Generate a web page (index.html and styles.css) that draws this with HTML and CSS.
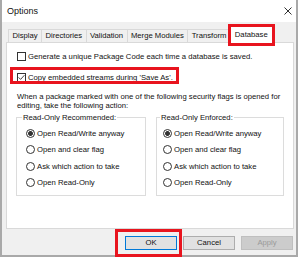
FILE: index.html
```html
<!DOCTYPE html>
<html>
<head>
<meta charset="utf-8">
<link rel="stylesheet" href="styles.css">
</head>
<body>
<div class="window">
  <div class="titlebar">
    <span class="title">Options</span>
    <svg class="close" width="8" height="8" viewBox="0 0 8 8"><path d="M0.5 0.5L7.5 7.5M7.5 0.5L0.5 7.5" stroke="#1a1a1a" stroke-width="0.9" fill="none"/></svg>
  </div>
  <div class="content">
    <div class="tabs">
      <div class="tab">Display</div>
      <div class="tab">Directories</div>
      <div class="tab">Validation</div>
      <div class="tab">Merge Modules</div>
      <div class="tab">Transform</div>
      <div class="tab active">Database</div>
    </div>
    <div class="panel">
      <div class="check"><span class="box"></span><span>Generate a unique Package Code each time a database is saved.</span></div>
      <div class="check marked"><span class="box"><svg width="7" height="7" viewBox="0 0 7 7"><path d="M0.6 3.4L2.6 5.4L6.4 1.2" stroke="#333" stroke-width="0.9" fill="none"/></svg></span><span>Copy embedded streams during 'Save As'.</span></div>
      <p class="info">When a package marked with one of the following security flags is opened for<br>editing, take the following action:</p>
      <div class="groups">
        <fieldset class="group left">
          <legend>Read-Only Recommended:</legend>
          <div class="radio"><span class="dot on"></span><span>Open Read/Write anyway</span></div>
          <div class="radio"><span class="dot"></span><span>Open and clear flag</span></div>
          <div class="radio"><span class="dot"></span><span>Ask which action to take</span></div>
          <div class="radio"><span class="dot"></span><span>Open Read-Only</span></div>
        </fieldset>
        <fieldset class="group right">
          <legend>Read-Only Enforced:</legend>
          <div class="radio"><span class="dot on"></span><span>Open Read/Write anyway</span></div>
          <div class="radio"><span class="dot"></span><span>Open and clear flag</span></div>
          <div class="radio"><span class="dot"></span><span>Ask which action to take</span></div>
          <div class="radio"><span class="dot"></span><span>Open Read-Only</span></div>
        </fieldset>
      </div>
    </div>
    <div class="buttons">
      <div class="okwrap"><button class="btn default">OK</button></div>
      <button class="btn">Cancel</button>
      <button class="btn" disabled>Apply</button>
    </div>
  </div>
</div>
</body>
</html>
```
FILE: styles.css
```css
* { box-sizing: border-box; }
html, body { margin: 0; padding: 0; }
body {
  width: 300px;
  height: 257px;
  overflow: hidden;
  background: #ffffff;
  font-family: "Liberation Sans", Arial, sans-serif;
  font-size: 7.7px;
  color: #111;
}
.window {
  width: 298px;
  height: 257px;
  border: 2px solid #a9a9a9;
  border-top: 0;
  background: #f0f0f0;
  display: flex;
  flex-direction: column;
}
.titlebar {
  flex: none;
  height: 22px;
  background: #fff;
  display: flex;
  align-items: center;
  justify-content: space-between;
  padding: 0 4px 0 5px;
}
.title { font-size: 9px; }
.close { display: block; }
.content {
  flex: 1;
  display: flex;
  flex-direction: column;
  padding: 4px 2px 0 4px;
}
.tabs {
  height: 16px;
  display: flex;
  align-items: flex-end;
  padding-left: 3px;
  position: relative;
  z-index: 1;
}
.tab {
  height: 13px;
  line-height: 12px;
  padding: 0 3.4px;
  margin-left: -1px;
  border: 1px solid #d9d9d9;
  border-bottom: 0;
  background: #f0f0f0;
  white-space: nowrap;
}
.tab.active {
  height: 17px;
  line-height: 15px;
  background: #fff;
  margin: 0 -2px -1px -2px;
  padding: 0 5px;
  position: relative;
}
.tab.active::after {
  content: "";
  position: absolute;
  left: -2px;
  right: -2px;
  top: -3px;
  bottom: -3px;
  border: 3px solid #e8141e;
}
.panel {
  height: 187px;
  border: 1px solid #d9d9d9;
  background: #fff;
  padding: 8px 9px 0 10px;
}
.check {
  display: flex;
  align-items: center;
  gap: 2px;
  height: 11px;
  white-space: nowrap;
}
.check + .check { margin-top: 10px; }
.check.marked {
  width: max-content;
  position: relative;
}
.check.marked::after {
  content: "";
  position: absolute;
  left: -7px;
  right: -6px;
  top: -5px;
  bottom: -1px;
  border: 3px solid #e8141e;
}
.box {
  width: 9px;
  height: 9px;
  border: 1px solid #333;
  background: #fff;
  display: flex;
  align-items: center;
  justify-content: center;
  flex: none;
}
.box svg { display: block; }
.info {
  margin: 9px 0 0;
  line-height: 9px;
  white-space: nowrap;
}
.groups {
  display: flex;
  gap: 10px;
  margin: 3px 0 0 -1px;
}
.group {
  margin: 0;
  min-width: 0;
  border: 1px solid #dcdcdc;
  padding: 3px 0 4px 9px;
}
.group.left { width: 130px; }
.group.right { width: 128px; padding-left: 6px; }
.group legend {
  line-height: 9px;
  padding: 0 1px;
  margin-left: -4px;
}
.group.right legend { margin-left: -3px; }
.radio {
  height: 16.5px;
  display: flex;
  align-items: center;
  gap: 2px;
  white-space: nowrap;
}
.dot {
  width: 9px;
  height: 9px;
  border: 1px solid #333;
  border-radius: 50%;
  background: #fff;
  flex: none;
}
.dot.on {
  background: radial-gradient(circle, #333 0 2.1px, #fff 2.7px);
}
.buttons {
  display: flex;
  justify-content: flex-end;
  gap: 6px;
  margin-top: 7px;
  padding-right: 1px;
}
.okwrap {
  position: relative;
  display: flex;
}
.okwrap::after {
  content: "";
  position: absolute;
  left: -10px;
  right: -5px;
  top: -7px;
  bottom: -7px;
  border: 3px solid #e8141e;
}
.btn {
  width: 52px;
  height: 14px;
  padding: 0;
  margin: 0;
  border: 1px solid #adadad;
  background: #e1e1e1;
  font: inherit;
  color: #111;
  line-height: 12px;
}
.btn.default { border-color: #0078d7; }
.btn:disabled {
  background: #cccccc;
  border-color: #bfbfbf;
  color: #9a9a9a;
}
```
